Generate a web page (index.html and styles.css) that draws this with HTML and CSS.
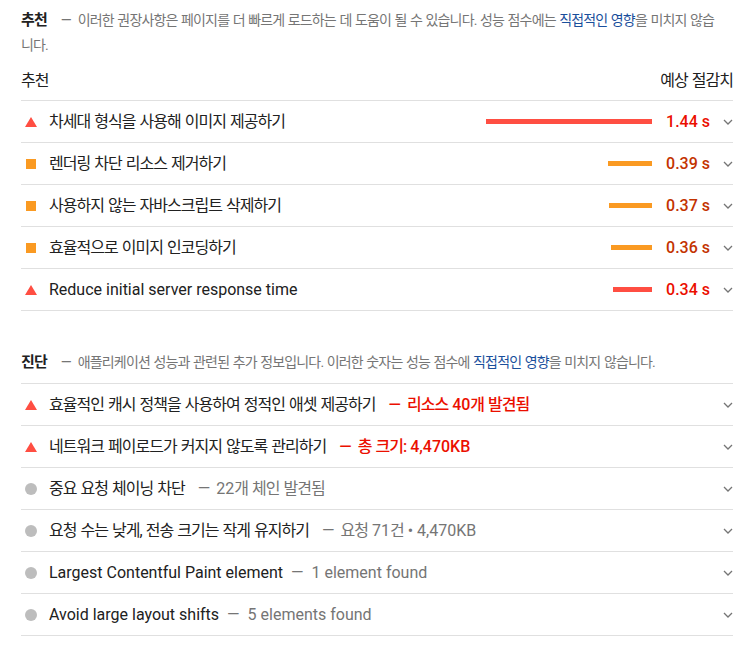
FILE: index.html
```html
<!DOCTYPE html>
<html lang="ko">
<head>
<meta charset="utf-8">
<link rel="stylesheet" href="styles.css">
</head>
<body>
<div class="page">
  <section class="group group--opps">
    <div class="group-header group-header--opps">
      <span class="group-title ko">추천</span><span class="dash dash--head">—</span><span class="group-desc ko">이러한 권장사항은 페이지를 더 빠르게 로드하는 데 도움이 될 수 있습니다. 성능 점수에는 <a class="link">직접적인 영향</a>을 미치지 않습니다.</span>
    </div>
    <div class="table-head ko">
      <span>추천</span>
      <span>예상 절감치</span>
    </div>
    <div class="row">
      <span class="icon icon--fail"></span>
      <span class="title ko">차세대 형식을 사용해 이미지 제공하기</span>
      <span class="bar bar--fail" style="width:166px"></span>
      <span class="value value--fail">1.44 s</span>
      <svg class="chev" viewBox="0 0 10 6"><polyline points="1,1 5,5 9,1"/></svg>
    </div>
    <div class="row">
      <span class="icon icon--avg"></span>
      <span class="title ko">렌더링 차단 리소스 제거하기</span>
      <span class="bar bar--avg" style="width:44px"></span>
      <span class="value value--avg">0.39 s</span>
      <svg class="chev" viewBox="0 0 10 6"><polyline points="1,1 5,5 9,1"/></svg>
    </div>
    <div class="row">
      <span class="icon icon--avg"></span>
      <span class="title ko">사용하지 않는 자바스크립트 삭제하기</span>
      <span class="bar bar--avg" style="width:43px"></span>
      <span class="value value--avg">0.37 s</span>
      <svg class="chev" viewBox="0 0 10 6"><polyline points="1,1 5,5 9,1"/></svg>
    </div>
    <div class="row">
      <span class="icon icon--avg"></span>
      <span class="title ko">효율적으로 이미지 인코딩하기</span>
      <span class="bar bar--avg" style="width:41px"></span>
      <span class="value value--avg">0.36 s</span>
      <svg class="chev" viewBox="0 0 10 6"><polyline points="1,1 5,5 9,1"/></svg>
    </div>
    <div class="row">
      <span class="icon icon--fail"></span>
      <span class="title">Reduce initial server response time</span>
      <span class="bar bar--fail" style="width:39px"></span>
      <span class="value value--fail">0.34 s</span>
      <svg class="chev" viewBox="0 0 10 6"><polyline points="1,1 5,5 9,1"/></svg>
    </div>
  </section>

  <section class="group group--diag">
    <div class="group-header group-header--diag">
      <span class="group-title ko">진단</span><span class="dash dash--head">—</span><span class="group-desc ko">애플리케이션 성능과 관련된 추가 정보입니다. 이러한 숫자는 성능 점수에 <a class="link">직접적인 영향</a>을 미치지 않습니다.</span>
    </div>
    <div class="row">
      <span class="icon icon--fail"></span>
      <span class="title"><span class="ko">효율적인 캐시 정책을 사용하여 정적인 애셋 제공하기</span><span class="extra extra--fail"><span class="dash dash--ko">—</span><span class="ko">리소스 </span>40<span class="ko">개 발견됨</span></span></span>
      <svg class="chev" viewBox="0 0 10 6"><polyline points="1,1 5,5 9,1"/></svg>
    </div>
    <div class="row">
      <span class="icon icon--fail"></span>
      <span class="title"><span class="ko">네트워크 페이로드가 커지지 않도록 관리하기</span><span class="extra extra--fail"><span class="dash dash--ko">—</span><span class="ko">총 크기:</span> 4,470KB</span></span>
      <svg class="chev" viewBox="0 0 10 6"><polyline points="1,1 5,5 9,1"/></svg>
    </div>
    <div class="row">
      <span class="icon icon--info"></span>
      <span class="title"><span class="ko">중요 요청 체이닝 차단</span><span class="extra"><span class="dash dash--ko">—</span>22<span class="ko">개 체인 발견됨</span></span></span>
      <svg class="chev" viewBox="0 0 10 6"><polyline points="1,1 5,5 9,1"/></svg>
    </div>
    <div class="row">
      <span class="icon icon--info"></span>
      <span class="title"><span class="ko">요청 수는 낮게, 전송 크기는 작게 유지하기</span><span class="extra"><span class="dash dash--ko">—</span><span class="ko">요청 </span>71<span class="ko">건</span> • 4,470KB</span></span>
      <svg class="chev" viewBox="0 0 10 6"><polyline points="1,1 5,5 9,1"/></svg>
    </div>
    <div class="row">
      <span class="icon icon--info"></span>
      <span class="title">Largest Contentful Paint element<span class="extra"><span class="dash">—</span>1 element found</span></span>
      <svg class="chev" viewBox="0 0 10 6"><polyline points="1,1 5,5 9,1"/></svg>
    </div>
    <div class="row">
      <span class="icon icon--info"></span>
      <span class="title">Avoid large layout shifts<span class="extra"><span class="dash">—</span>5 elements found</span></span>
      <svg class="chev" viewBox="0 0 10 6"><polyline points="1,1 5,5 9,1"/></svg>
    </div>
  </section>
</div>
</body>
</html>
```

FILE: styles.css
```css
html, body {
  margin: 0;
  padding: 0;
  background: #ffffff;
}

body {
  font-family: Roboto, "Noto Sans CJK KR", "Liberation Sans", sans-serif;
  color: #212121;
  font-size: 16px;
}

.page {
  padding: 0 22px 0 21px;
}

/* Korean runs: tighter hangul advance, spaces kept */
.ko {
  letter-spacing: -0.06em;
  word-spacing: 0.06em;
}

.group-header {
  font-size: 14px;
  line-height: 25px;
}

.group-header--opps {
  padding: 8px 12px 0 0;
}

.group-title {
  font-size: 15px;
  font-weight: 700;
  color: #212121;
}

.group-desc {
  font-size: 14px;
  color: #757575;
}

.link {
  color: #1a4f9c;
}

.dash {
  display: inline-block;
  margin: 0 8px;
}

.dash--head {
  color: #757575;
  font-size: 14px;
  margin: 0 6px 0 14px;
}

.dash--ko {
  margin: 0 6px 0 13px;
}

.table-head {
  display: flex;
  justify-content: space-between;
  align-items: center;
  height: 43px;
  padding-top: 4px;
  box-sizing: border-box;
  border-bottom: 1px solid #e0e0e0;
  font-size: 16px;
  line-height: 20px;
  color: #212121;
}

.row {
  display: flex;
  align-items: center;
  height: 42px;
  box-sizing: border-box;
  border-bottom: 1px solid #e0e0e0;
  line-height: 20px;
}

.icon {
  flex: none;
  margin-left: 4px;
  margin-right: 12px;
  width: 12px;
  height: 12px;
  display: flex;
  align-items: center;
  justify-content: center;
}

.icon--fail {
  width: 0;
  height: 0;
  border-left: 6px solid transparent;
  border-right: 6px solid transparent;
  border-bottom: 10px solid #ff4e42;
}

.icon--avg::before {
  content: "";
  width: 10px;
  height: 10px;
  background: #fa9a22;
}

.icon--info::before {
  content: "";
  width: 12px;
  height: 12px;
  border-radius: 50%;
  background: #bdbdbd;
}

.title {
  flex: 1;
  font-size: 16px;
  color: #212121;
  white-space: nowrap;
}

.extra {
  color: #757575;
}

.extra--fail {
  color: #eb0f00;
  font-weight: 500;
}

.bar {
  flex: none;
  height: 5px;
}

.bar--fail {
  background: #ff4e42;
}

.bar--avg {
  background: #fa9a22;
}

.value {
  flex: none;
  margin-left: 14px;
  font-size: 16px;
  font-weight: 500;
}

.value--fail {
  color: #eb0f00;
}

.value--avg {
  color: #c33300;
}

.chev {
  flex: none;
  width: 10px;
  height: 6px;
  margin-left: 13px;
  fill: none;
  stroke: #757575;
  stroke-width: 1.3;
}

.group--diag {
  margin-top: 39px;
}

.group-header--diag {
  padding-top: 0;
  padding-bottom: 8px;
  border-bottom: 1px solid #e0e0e0;
}
```
